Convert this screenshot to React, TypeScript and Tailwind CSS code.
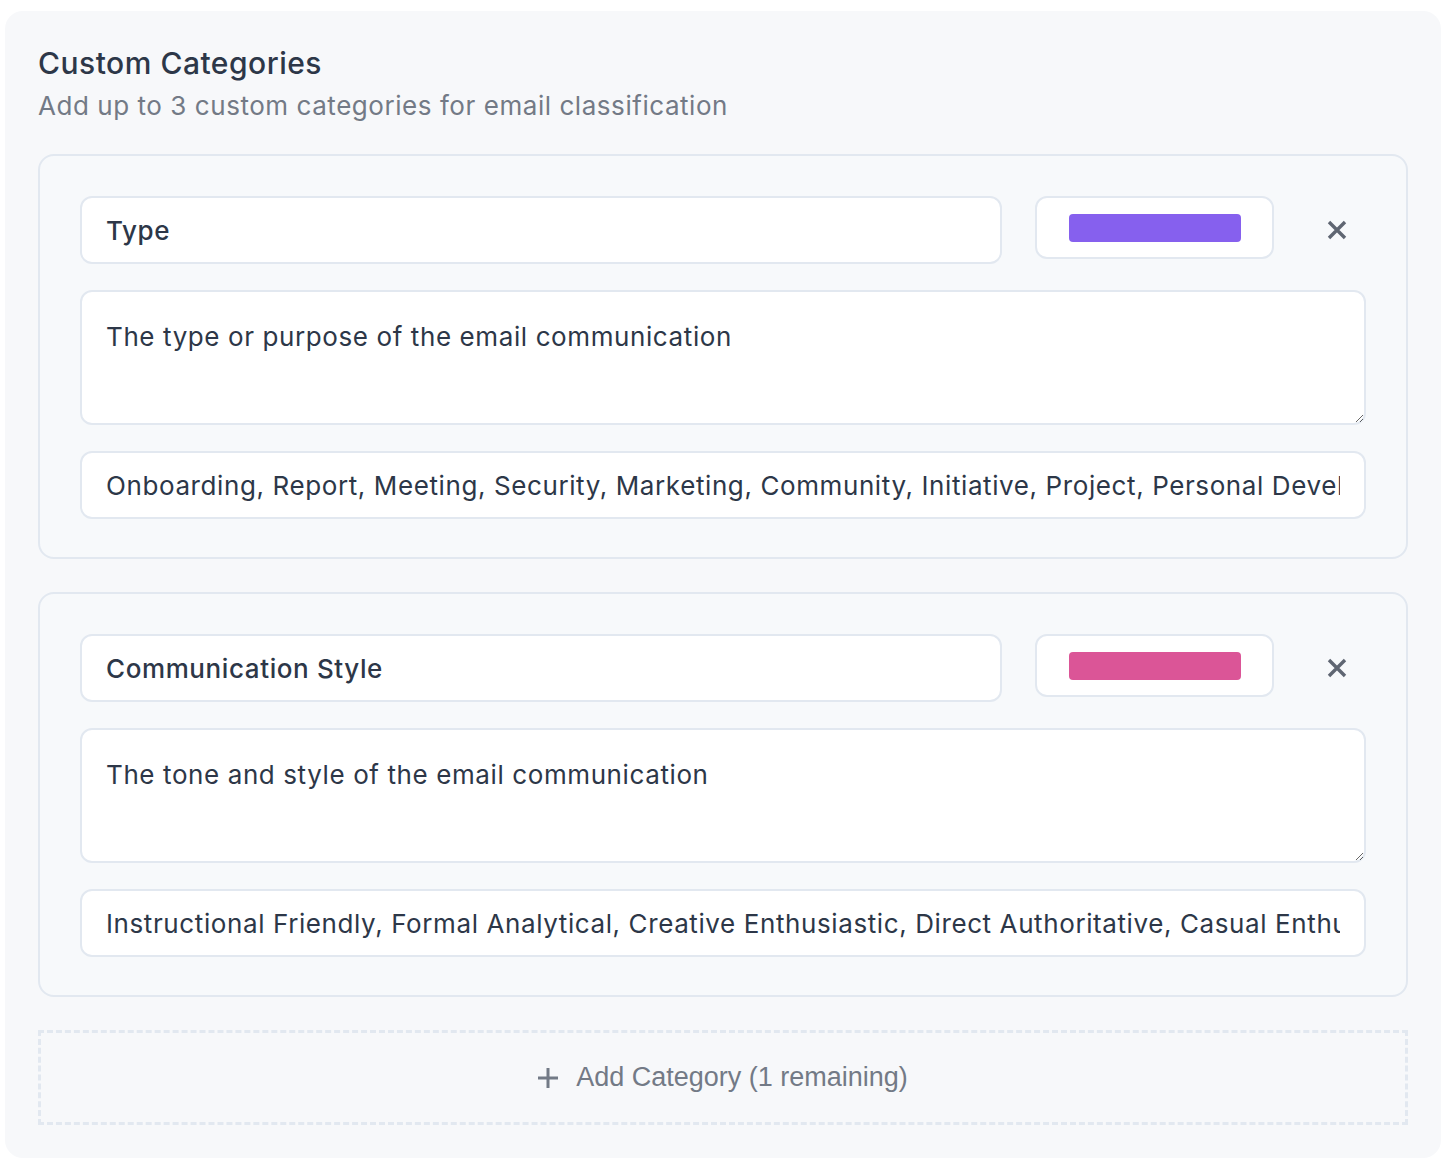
import React from "react";

const font = { fontFamily: "Inter, 'Noto Sans', sans-serif" };

function XIcon() {
  return (
    <svg width="22" height="22" viewBox="0 0 22 22" fill="none" stroke="#5f6672" strokeWidth="3.4" strokeLinecap="butt">
      <path d="M3 3 L19 19 M19 3 L3 19" />
    </svg>
  );
}

function Card({ name, color, desc, values }: { name: string; color: string; desc: string; values: string }) {
  return (
    <div className="rounded-[16px] border-2 border-[#e2e8f0] bg-[#f7f9fb] px-[40px] pt-[40px] pb-[38px] flex flex-col gap-[26px]">
      <div className="flex items-start">
        <input
          readOnly
          value={name}
          className="w-[922px] h-[68px] rounded-[12px] border-2 border-[#e2e8f0] bg-white pl-[24px] pr-[24px] text-[26px] tracking-[0.6px] font-medium text-[#2d3748] outline-none"
          style={font}
        />
        <div className="ml-[33px] w-[239px] h-[63px] rounded-[12px] border-2 border-[#e2e8f0] bg-white flex items-center justify-center">
          <div className="w-[172px] h-[28px] rounded-[4px]" style={{ backgroundColor: color }} />
        </div>
        <div className="flex-1 h-[68px] flex items-center justify-end pr-[18px]">
          <XIcon />
        </div>
      </div>
      <textarea
        readOnly
        value={desc}
        className="w-full h-[135px] rounded-[12px] border-2 border-[#e2e8f0] bg-white pl-[24px] pr-[24px] pt-[27px] text-[26px] tracking-[0.6px] text-[#2d3748] outline-none resize-y block leading-[36px]"
        style={font}
      />
      <input
        readOnly
        value={values}
        className="w-full h-[68px] rounded-[12px] border-2 border-[#e2e8f0] bg-white pl-[24px] pr-[24px] text-[26px] tracking-[0.6px] text-[#2d3748] outline-none"
        style={font}
      />
    </div>
  );
}

export default function App() {
  return (
    <div className="min-h-[1172px] bg-white pl-[5px] pt-[11px]">
      <div className="w-[1436px] h-[1147px] rounded-[18px] bg-[#f7f8fa] px-[33px] pt-[32px]" style={font}>
        <div className="text-[30px] tracking-[0.5px] font-medium text-[#2d3748] leading-[40px]">Custom Categories</div>
        <div className="text-[26px] tracking-[0.55px] text-[#737a86] leading-[32px] mt-[7px]">
          Add up to 3 custom categories for email classification
        </div>
        <div className="mt-[32px] flex flex-col gap-[33px]">
          <Card
            name="Type"
            color="#8660ee"
            desc="The type or purpose of the email communication"
            values="Onboarding, Report, Meeting, Security, Marketing, Community, Initiative, Project, Personal Development, Newsletter"
          />
          <Card
            name="Communication Style"
            color="#db5597"
            desc="The tone and style of the email communication"
            values="Instructional Friendly, Formal Analytical, Creative Enthusiastic, Direct Authoritative, Casual Enthusiastic, Professional"
          />
          <button
            className="h-[95px] w-full border-[3px] border-dashed border-[#e2e8f0] flex items-center justify-center gap-[18px] text-[#737a86]"
          >
            <svg width="20" height="20" viewBox="0 0 20 20" stroke="#737a86" strokeWidth="3">
              <path d="M10 0 V20 M0 10 H20" />
            </svg>
            <span className="text-[27px]" style={{ fontFamily: "'Liberation Sans', Arial, sans-serif" }}>
              Add Category (1 remaining)
            </span>
          </button>
        </div>
      </div>
    </div>
  );
}
